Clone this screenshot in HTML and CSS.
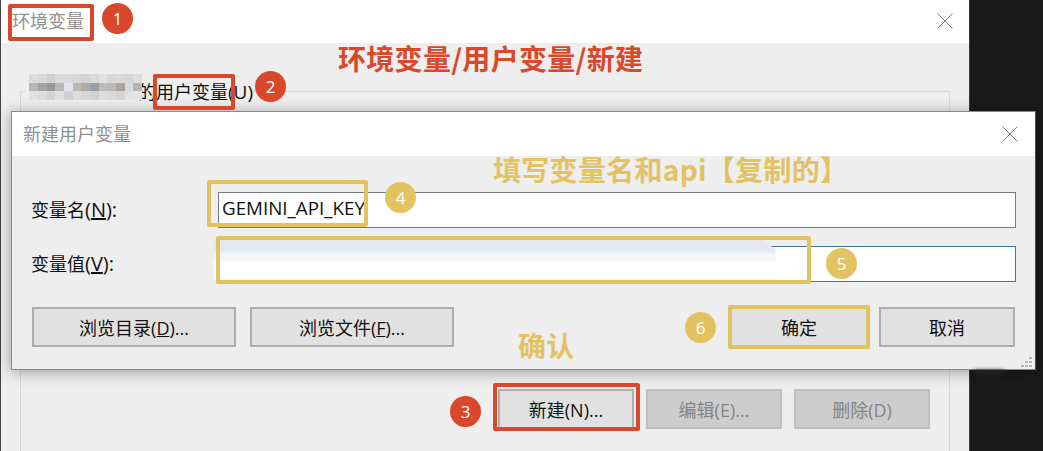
FILE: index.html
```html
<!DOCTYPE html>
<html lang="zh-CN">
<head>
    <meta charset="UTF-8">
    <title>环境变量</title>
    <link rel="stylesheet" href="styles.css">
</head>
<body>
    <div class="desktop">
        <!-- Back window -->
        <div class="window env-window">
            <div class="titlebar">
                <span class="title">环境变量</span>
                <svg class="close" viewBox="0 0 16 16"><path d="M0.5 0.5L15.5 15.5M15.5 0.5L0.5 15.5"/></svg>
            </div>
            <fieldset class="group">
                <legend class="group-title">
                    <svg class="mosaic" viewBox="0 0 13 3" shape-rendering="crispEdges">
                        <g id="mosaicRows"></g>
                    </svg>
                    <span>的用户变量<span class="latin">(U)</span></span>
                </legend>
                <div class="group-buttons">
                    <button class="btn">新建(N)...</button>
                    <button class="btn" disabled>编辑(E)...</button>
                    <button class="btn" disabled>删除(D)</button>
                </div>
            </fieldset>
        </div>

        <!-- Front dialog -->
        <div class="window new-dialog">
            <div class="titlebar dialog-titlebar">
                <span class="title">新建用户变量</span>
                <svg class="close" viewBox="0 0 16 16"><path d="M0.5 0.5L15.5 15.5M15.5 0.5L0.5 15.5"/></svg>
            </div>
            <div class="dialog-body">
                <div class="form-grid">
                    <label>变量名<span class="latin">(<u>N</u>):</span></label>
                    <div class="field">GEMINI_API_KEY</div>
                    <label>变量值<span class="latin">(<u>V</u>):</span></label>
                    <div class="field focused"></div>
                </div>
                <div class="dialog-buttons">
                    <button class="btn wide">浏览目录(<u>D</u>)...</button>
                    <button class="btn wide">浏览文件(<u>F</u>)...</button>
                    <button class="btn push default">确定</button>
                    <button class="btn">取消</button>
                </div>
            </div>
            <svg class="grip" viewBox="0 0 11 10" shape-rendering="crispEdges">
                <path d="M8 0h3v2H8zM4 4h3v2H4zM8 4h3v2H8zM0 8h3v2H0zM4 8h3v2H4zM8 8h3v2H8z"/>
            </svg>
        </div>

        <!-- Annotations -->
        <div class="redacted"></div>
        <div class="smudge"></div>

        <div class="box red box-1"></div>
        <div class="box red box-2"></div>
        <div class="box red box-3"></div>
        <div class="box gold box-4"></div>
        <div class="box gold box-5"></div>
        <div class="box gold box-6"></div>

        <div class="dot red-dot dot-1">1</div>
        <div class="dot red-dot dot-2">2</div>
        <div class="dot red-dot dot-3">3</div>
        <div class="dot gold-dot dot-4">4</div>
        <div class="dot gold-dot dot-5">5</div>
        <div class="dot gold-dot dot-6">6</div>

        <div class="note red-note note-path">环境变量/用户变量/新建</div>
        <div class="note gold-note note-fill">填写变量名和api【复制的】</div>
        <div class="note gold-note note-ok">确认</div>
    </div>

    <script>
        // Pixelated name next to the group title
        const rows = [
            ["#dcdcdc","#d8d8d8","#cfcfcf","#dadada","#d9dadb","#d6d6d6","#d2d3d5","#dcdad8","#dfe0e1","#d8d7d6","#d9d9d9","#d6d6d6","#dcdcdc"],
            ["#bab7b3","#a3a3a5","#999892","#b5b6b6","#dfe5e9","#b9b8b6","#aea9a2","#9ba0a8","#bdb9b6","#b7b8b8","#aaa39e","#d5dade","#b8b6b2"],
            ["#e1e1e1","#dcdcdc","#d3d3d3","#dfdfdf","#d0d0d2","#dcdcdc","#d7d6d5","#d0d2d4","#dedddc","#d9dadb","#d6d5d4","#e2e3e4","#e4e4e4"]
        ];
        const group = document.getElementById("mosaicRows");
        rows.forEach((row, y) => {
            row.forEach((color, x) => {
                const cell = document.createElementNS("http://www.w3.org/2000/svg", "rect");
                cell.setAttribute("x", x);
                cell.setAttribute("y", y);
                cell.setAttribute("width", 1);
                cell.setAttribute("height", 1);
                cell.setAttribute("fill", color);
                group.appendChild(cell);
            });
        });
    </script>
</body>
</html>
```
FILE: styles.css
```css
* {
    box-sizing: border-box;
}

body {
    margin: 0;
    background-color: #1a1a1a;
    font-family: "Open Sans", "Noto Sans CJK SC", sans-serif;
    font-size: 18px;
    color: #111;
    overflow: hidden;
}

.desktop {
    position: relative;
    width: 1043px;
    height: 451px;
    overflow: hidden;
}

.window {
    position: absolute;
    background-color: #eeeeee;
}

.env-window {
    left: 0;
    top: 0;
    width: 970px;
    height: 451px;
    border-left: 1px solid #444;
    border-right: 1px solid #3a3a3a;
}

.new-dialog {
    left: 11px;
    top: 111px;
    width: 1025px;
    height: 259px;
    border: 1px solid #8a8a8a;
    border-right-color: #4a4a4a;
    box-shadow: 0 2px 14px rgba(0, 0, 0, 0.35);
}

.titlebar {
    display: flex;
    align-items: center;
    justify-content: space-between;
    height: 43px;
    padding: 0 16px 2px 11px;
    background-color: #fff;
}

.dialog-titlebar {
    height: 44px;
    padding: 0 17px 0 11px;
}

.title {
    color: #8f8f8f;
    line-height: 1;
}

.close {
    width: 16px;
    height: 16px;
    fill: none;
    stroke: #808080;
    stroke-width: 1;
}

.group {
    height: 420px;
    margin: 34px 19px 0 19px;
    padding: 0 19px 0 0;
    border: 1px solid #d9d9d9;
}

.group-title {
    display: flex;
    align-items: center;
    margin-left: 4px;
    padding: 0;
    height: 28px;
    line-height: 28px;
    color: #111;
}

.group-title > span {
    margin-top: 2px;
}

.group-title .latin {
    font-size: 19px;
}

.mosaic {
    position: relative;
    z-index: 1;
    width: 117px;
    height: 26px;
    margin: 0 -6px 8px 2px;
    filter: blur(0.6px);
}

.latin {
    font-size: 20px;
}

.group-buttons {
    display: flex;
    justify-content: flex-end;
    gap: 12px;
    margin-top: 284px;
}

.btn {
    width: 136px;
    height: 40px;
    padding: 0;
    border: 2px solid #adadad;
    background-color: #e1e1e1;
    color: #111;
    font-family: inherit;
    font-size: 18px;
}

.btn:disabled {
    border-color: #bfbfbf;
    background-color: #cccccc;
    color: #858585;
}

.btn.wide {
    width: 204px;
}

.btn.push {
    margin-left: auto;
}

.btn.default {
    border-color: #e1e1e1;
}

.dialog-body {
    padding: 36px 19px 0 20px;
}

.form-grid {
    display: grid;
    grid-template-columns: 186px 1fr;
    row-gap: 18px;
    align-items: center;
}

.form-grid label {
    margin-left: -1px;
    line-height: 24px;
}

.field {
    height: 36px;
    padding-left: 3px;
    border: 1px solid #7a7a7a;
    background-color: #fff;
    font-size: 18.8px;
    line-height: 30px;
    white-space: nowrap;
}

.field.focused {
    border-color: #3f76a8;
}

.dialog-buttons {
    display: flex;
    gap: 14px;
    margin: 25px 1px 0 0;
}

.dialog-buttons .btn:last-child {
    margin-left: -2px;
}

.grip {
    position: absolute;
    right: 3px;
    bottom: 2px;
    width: 11px;
    height: 10px;
    fill: #b4b4b4;
}

/* Overlays painted on top of the screenshot */
.redacted {
    position: absolute;
    left: 213px;
    top: 239px;
    width: 563px;
    height: 45px;
    background: linear-gradient(#e3e9ee 0, #e3e9ee 28%, #f4f7f9 32%, #f4f7f9 48%, #fff 52%, #fff 88%, #e4e9ed 94%);
    clip-path: polygon(0 0, 97% 0, 100% 22%, 100% 100%, 0 100%);
    filter: blur(1px);
}

.smudge {
    position: absolute;
    left: 974px;
    top: 370px;
    width: 30px;
    height: 4px;
    background-color: #2a2a2a;
    filter: blur(2px);
}

.box {
    position: absolute;
    border: 4px solid;
    border-radius: 2px;
}

.box.red {
    border-color: #d9482b;
}

.box.gold {
    border-color: #e3c262;
}

.box-1 { left: 8px; top: 4px; width: 86px; height: 37px; }
.box-2 { left: 153px; top: 74px; width: 82px; height: 36px; }
.box-3 { left: 493px; top: 383px; width: 147px; height: 48px; }
.box-4 { left: 207px; top: 180px; width: 161px; height: 47px; }
.box-5 { left: 216px; top: 236px; width: 595px; height: 48px; }
.box-6 { left: 728px; top: 305px; width: 142px; height: 44px; }

.dot {
    position: absolute;
    display: flex;
    align-items: center;
    justify-content: center;
    width: 31px;
    height: 31px;
    border-radius: 50%;
    color: #fff;
    font-size: 17px;
}

.red-dot {
    background-color: #d9482b;
}

.gold-dot {
    background-color: #e3c262;
}

.dot-1 { left: 102px; top: 3px; }
.dot-2 { left: 255px; top: 71px; }
.dot-3 { left: 450px; top: 396px; }
.dot-4 { left: 385px; top: 182px; }
.dot-5 { left: 826px; top: 248px; }
.dot-6 { left: 685px; top: 312px; }

.note {
    position: absolute;
    font-family: "Noto Sans CJK SC", sans-serif;
    font-weight: 700;
    font-size: 28px;
    letter-spacing: 0.3px;
    line-height: 1;
    white-space: nowrap;
}

.red-note {
    color: #d9482b;
}

.gold-note {
    color: #e3c262;
}

.note-path { left: 338px; top: 44px; }
.note-fill { left: 493px; top: 155px; }
.note-ok { left: 518px; top: 331px; }
```
